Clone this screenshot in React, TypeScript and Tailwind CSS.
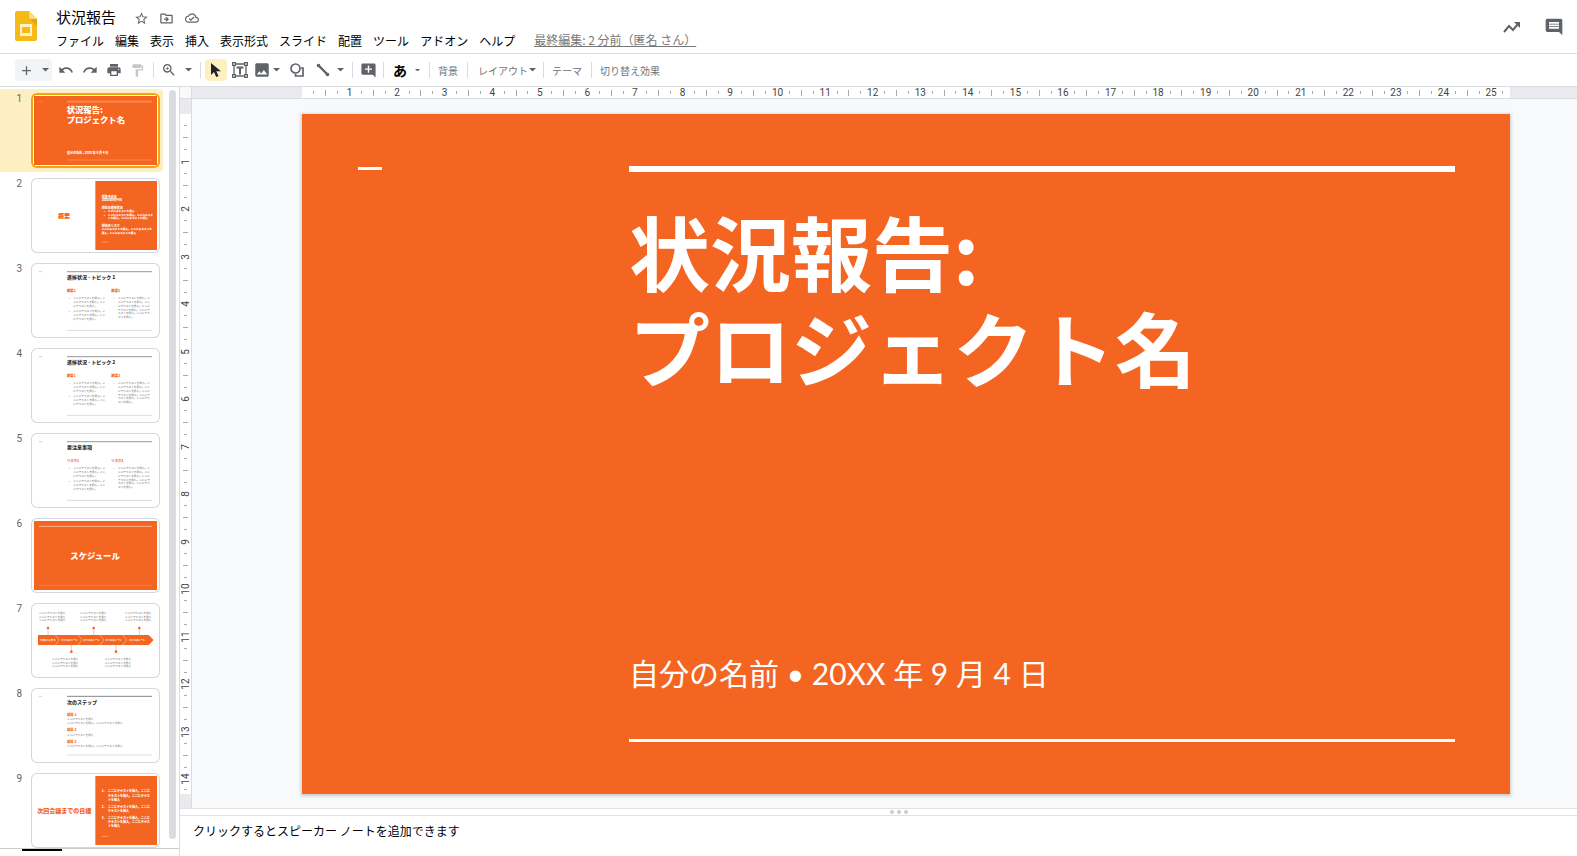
import React from 'react';
import {
  MdAdd,
  MdAddComment,
  MdFormatPaint,
  MdImage,
  MdInsertComment,
  MdOutlineCloudDone,
  MdOutlineDriveFileMove,
  MdPrint,
  MdRedo,
  MdStarBorder,
  MdUndo,
  MdZoomIn,
} from 'react-icons/md';

const ORANGE = '#f56522';

const menuItems = ['ファイル', '編集', '表示', '挿入', '表示形式', 'スライド', '配置', 'ツール', 'アドオン', 'ヘルプ'];

const PLACEHOLDER = 'ここにテキストを挿入';

/* ---------- Icons ---------- */

const SlidesLogo = () => (
  <svg viewBox="0 0 22 30" className="h-[30px] w-[22px]" aria-hidden="true">
    <path d="M2 0h12l8 8v20a2 2 0 0 1-2 2H2a2 2 0 0 1-2-2V2a2 2 0 0 1 2-2z" fill="#f5ba15" />
    <path d="M14 0l8 8h-6a2 2 0 0 1-2-2z" fill="#fadb80" />
    <path d="M15 8h7v7z" fill="#e3a413" />
    <path d="M5 13h12v12H5zM7 16v6h8v-6z" fill="#fff3cf" fillRule="evenodd" />
  </svg>
);

const PointerIcon = () => (
  <svg viewBox="0 0 12 16" className="h-4 w-3" aria-hidden="true">
    <path d="M1 1v12l3-3 2.200 5 2.300-1L6.300 9.200H11z" fill="#202124" />
  </svg>
);

const TextBoxIcon = () => (
  <svg viewBox="0 0 16 16" className="h-4 w-4" aria-hidden="true">
    <path d="M2 2h12v12H2z" fill="none" stroke="#5f6368" strokeWidth="1.300" />
    <path d="M0 0h4v4H0zM12 0h4v4h-4zM0 12h4v4H0zM12 12h4v4h-4z" fill="#5f6368" />
    <path d="M1.300 1.300h1.400v1.400H1.300zM13.300 1.300h1.400v1.400h-1.400zM1.300 13.300h1.400v1.400H1.300zM13.300 13.300h1.400v1.400h-1.400z" fill="#fff" />
    <path d="M4.500 4.500h7v2H9v6H7v-6H4.500z" fill="#5f6368" />
  </svg>
);

const ShapeIcon = () => (
  <svg viewBox="0 0 14 14" className="h-[14px] w-[14px]" aria-hidden="true" fill="none" stroke="#5f6368" strokeWidth="1.700">
    <circle cx="5.500" cy="5.500" r="4.500" />
    <path d="M11 5h2v8H5.500v-2" />
  </svg>
);

const LineIcon = () => (
  <svg viewBox="0 0 14 14" className="h-[14px] w-[14px]" aria-hidden="true">
    <path d="M2 2l10 10" stroke="#5f6368" strokeWidth="2.400" />
    <circle cx="2.500" cy="2.500" r="1.800" fill="#5f6368" />
    <circle cx="11.500" cy="11.500" r="1.800" fill="#5f6368" />
  </svg>
);

const ActivityIcon = () => (
  <svg viewBox="0 0 18 12" className="h-3 w-[18px]" aria-hidden="true">
    <path d="M1 11l5-6 4 4 5-6" fill="none" stroke="#5f6368" strokeWidth="2" />
    <path d="M11 1h6v6z" fill="#5f6368" />
  </svg>
);

const Caret = ({ small }: { small?: boolean }) => (
  <svg viewBox="0 0 8 4" className={small ? 'w-[5px]' : 'w-[7px]'} aria-hidden="true">
    <path d="M0 0h8L4 4z" fill="#5f6368" />
  </svg>
);

/* ---------- Header ---------- */

const Header = () => (
  <header className="flex h-[54px] shrink-0 border-b border-[#dadce0] pl-[15px] pr-[13px]">
    <div className="pt-[11px]">
      <SlidesLogo />
    </div>
    <div className="ml-[19px] flex flex-col">
      <div className="flex h-8 items-center pt-1 text-[#5f6368]">
        <h1 className="-mt-0.5 text-[15px] leading-5 text-black">状況報告</h1>
        <button aria-label="スターを付ける" className="ml-[18px]"><MdStarBorder size={15} /></button>
        <button aria-label="移動" className="ml-[10px]"><MdOutlineDriveFileMove size={15} /></button>
        <button aria-label="保存状況" className="ml-[11px]"><MdOutlineCloudDone size={14} /></button>
      </div>
      <nav className="flex items-center gap-[11px] text-[12px] leading-4 text-black">
        {menuItems.map((item) => (
          <button key={item}>{item}</button>
        ))}
        <a href="#history" className="mb-0.5 ml-2 text-[#777] underline">
          最終編集: 2 分前（匿名 さん）
        </a>
      </nav>
    </div>
    <div className="ml-auto flex items-center gap-[23px] text-[#5f6368]">
      <button aria-label="アクティビティ"><ActivityIcon /></button>
      <button aria-label="コメント履歴"><MdInsertComment size={20} /></button>
    </div>
  </header>
);

/* ---------- Toolbar ---------- */

const Divider = ({ className }: { className: string }) => <span className={`h-4 w-px bg-[#dadce0] ${className}`} />;

const Toolbar = () => (
  <div role="toolbar" className="flex h-[33px] shrink-0 items-center border-b border-[#dadce0] pl-[15px] text-[10px] text-[#70757a]">
    <button aria-label="新しいスライド" className="flex h-[22px] w-[37px] items-center justify-between rounded-sm bg-[#f1f3f4] pl-1 pr-[3px] text-[#5f6368]">
      <MdAdd size={15} />
      <Caret />
    </button>
    <button aria-label="元に戻す" className="ml-[6px] text-[#5f6368]"><MdUndo size={16} /></button>
    <button aria-label="やり直す" className="ml-2 text-[#5f6368]"><MdRedo size={16} /></button>
    <button aria-label="印刷" className="ml-2 text-[#5f6368]"><MdPrint size={16} /></button>
    <button aria-label="書式を貼り付け" className="ml-2 text-[#c4c6c9]"><MdFormatPaint size={15} /></button>
    <Divider className="ml-2" />
    <button aria-label="ズーム" className="ml-[7px] flex items-center gap-2 text-[#5f6368]"><MdZoomIn size={16} /><Caret /></button>
    <Divider className="ml-2" />
    <button aria-label="選択" aria-pressed="true" className="ml-1 flex h-[22px] w-[22px] items-center justify-center rounded-sm bg-[#feefc3]">
      <PointerIcon />
    </button>
    <button aria-label="テキスト ボックス" className="ml-[5px]"><TextBoxIcon /></button>
    <button aria-label="画像を挿入" className="ml-[5px] flex items-center gap-0.5 text-[#5f6368]"><MdImage size={18} /><Caret /></button>
    <button aria-label="図形" className="ml-[10px]"><ShapeIcon /></button>
    <button aria-label="線" className="ml-3 flex items-center gap-[7px]"><LineIcon /><Caret /></button>
    <Divider className="ml-2" />
    <button aria-label="コメントを追加" className="ml-[7px] text-[#5f6368]"><MdAddComment size={17} /></button>
    <Divider className="ml-[6px]" />
    <button aria-label="入力ツール" className="ml-[9px] flex items-center gap-2 text-[14px] font-bold text-black">あ<Caret small /></button>
    <Divider className="ml-[9px]" />
    <button className="ml-2">背景</button>
    <Divider className="ml-[9px]" />
    <button className="ml-[10px] flex items-center gap-px">レイアウト<Caret /></button>
    <Divider className="ml-[7px]" />
    <button className="ml-2">テーマ</button>
    <Divider className="ml-[9px]" />
    <button className="ml-2">切り替え効果</button>
  </div>
);

/* ---------- Thumbnails ---------- */

type LineProps = { x: number; y: number; size?: number; fill?: string; bold?: boolean; children: React.ReactNode };

const T = ({ x, y, size = 8, fill = '#666', bold, children }: LineProps) => (
  <text x={x} y={y} fontSize={size} fill={fill} fontWeight={bold ? 900 : 400}>
    {children}
  </text>
);

const CoverThumb = () => (
  <>
    <rect width="369" height="207" fill={ORANGE} />
    <path d="M99 17h255" stroke="#fff" strokeOpacity="0.250" strokeWidth="5" />
    <path d="M15 17h9M99 192h255" stroke="#fff" strokeOpacity="0.300" strokeWidth="2" />
    <T x={98} y={52} size={25} fill="#fff" bold>状況報告:</T>
    <T x={98} y={82} size={25} fill="#fff" bold>プロジェクト名</T>
    <T x={99} y={175} size={9} fill="#fff" bold>自分の名前 • 20XX 年 9 月 4 日</T>
  </>
);

const OverviewThumb = () => (
  <>
    <rect x="184" width="185" height="207" fill={ORANGE} />
    <T x={72} y={111} size={18} fill={ORANGE} bold>概要</T>
    <T x={203} y={51} size={9} fill="#fff" bold>報告予定日</T>
    <T x={203} y={61} size={9} fill="#fff" bold>20XX年9月4日</T>
    <T x={203} y={83} size={9} fill="#fff" bold>現在の進捗状況</T>
    <T x={210} y={93} fill="#fff" bold>•</T>
    <T x={222} y={93} fill="#fff" bold>{PLACEHOLDER}</T>
    <T x={210} y={105} fill="#fff" bold>•</T>
    <T x={222} y={105} fill="#fff" bold>{PLACEHOLDER}。ここにテキス</T>
    <T x={222} y={115} fill="#fff" bold>トを挿入。ここにテキストを挿入</T>
    <T x={203} y={137} size={9} fill="#fff" bold>現在のリスク</T>
    <T x={203} y={146} fill="#fff" bold>{PLACEHOLDER}。ここにテキストを</T>
    <T x={203} y={158} fill="#fff" bold>挿入。ここにテキストを挿入</T>
    <path d="M203 183h20" stroke="#fff" strokeOpacity="0.500" strokeWidth="2" />
  </>
);

const TopicThumb = ({ title, head }: { title: string; head: string }) => (
  <>
    <path d="M99 17h255" stroke="#aaa" strokeWidth="4" />
    <path d="M15 17h9" stroke="#bbb" strokeWidth="2" />
    <T x={99} y={40} size={15} fill="#333" bold>{title}</T>
    <T x={99} y={79} size={10} fill={ORANGE} bold>{head}1</T>
    <T x={232} y={79} size={10} fill={ORANGE} bold>{head}2</T>
    <T x={105} y={100}>•</T>
    <T x={118} y={100}>ここにテキストを挿入。こ</T>
    <T x={118} y={112}>こにテキストを挿入。ここ</T>
    <T x={118} y={122}>にテキストを挿入。</T>
    <T x={105} y={139}>•</T>
    <T x={118} y={139}>ここにテキストを挿入。こ</T>
    <T x={118} y={151}>こにテキストを挿入。ここ</T>
    <T x={118} y={162}>にテキストを挿入。</T>
    <T x={238} y={100}>•</T>
    <T x={252} y={100}>ここにテキストを挿入。こ</T>
    <T x={252} y={112}>こにテキストを挿入。ここ</T>
    <T x={252} y={122}>にテキストを挿入。ここに</T>
    <T x={252} y={134}>テキストを挿入。ここにテ</T>
    <T x={252} y={145}>キストを挿入。ここにテキ</T>
    <T x={252} y={157}>ストを挿入。</T>
    <path d="M99 193h255" stroke="#ddd" strokeWidth="3" />
  </>
);

const ScheduleThumb = () => (
  <>
    <rect width="369" height="207" fill={ORANGE} />
    <path d="M15 16h339" stroke="#fff" strokeOpacity="0.500" strokeWidth="3" />
    <path d="M15 193h339" stroke="#fff" strokeOpacity="0.150" strokeWidth="3" />
    <T x={109} y={114} size={25} fill="#fff" bold>スケジュール</T>
  </>
);

const Note = ({ x, y }: { x: number; y: number }) => (
  <>
    <T x={x} y={y}>{PLACEHOLDER}</T>
    <T x={x} y={y + 10}>{PLACEHOLDER}</T>
    <T x={x} y={y + 20}>{PLACEHOLDER}</T>
  </>
);

const TimelineThumb = () => (
  <>
    <Note x={15} y={25} />
    <Note x={138} y={25} />
    <Note x={273} y={25} />
    <Note x={54} y={163} />
    <Note x={212} y={163} />
    <path d="M42 66v21M179 66v21M316 66v21M112 117v20M246 117v20" stroke="#bbb" strokeWidth="2" />
    {[42, 179, 316].map((x) => <circle key={x} cx={x} cy="66" r="4" fill={ORANGE} />)}
    {[112, 246].map((x) => <circle key={x} cx={x} cy="137" r="4" fill={ORANGE} />)}
    <path d="M12 87h332l15 15-15 15H12z" fill={ORANGE} />
    <path d="M64 87l12 15-12 15M132 87l12 15-12 15M198 87l12 15-12 15M266 87l12 15-12 15" fill="none" stroke="#fff" strokeOpacity="0.600" strokeWidth="2" />
    <T x={18} y={105} size={8} fill="#fff" bold>プロジェクト</T>
    {[82, 148, 214, 285].map((x) => <T key={x} x={x} y={105} size={7} fill="#fff" bold>マイルストーン</T>)}
  </>
);

const StepsThumb = () => (
  <>
    <path d="M99 16h255" stroke="#888" strokeWidth="3" />
    <path d="M15 16h9" stroke="#bbb" strokeWidth="2" />
    <T x={99} y={40} size={15} fill="#333" bold>次のステップ</T>
    <T x={99} y={76} size={10} fill={ORANGE} bold>項目 1</T>
    <T x={99} y={88}>{PLACEHOLDER}</T>
    <T x={99} y={100}>{PLACEHOLDER}。{PLACEHOLDER}</T>
    <T x={99} y={121} size={10} fill={ORANGE} bold>項目 2</T>
    <T x={99} y={136}>{PLACEHOLDER}</T>
    <T x={99} y={157} size={10} fill={ORANGE} bold>項目 3</T>
    <T x={99} y={169}>{PLACEHOLDER}。{PLACEHOLDER}</T>
    <path d="M99 192h255" stroke="#ccc" strokeWidth="2" />
  </>
);

const GoalsThumb = () => (
  <>
    <rect x="184" width="185" height="207" fill={ORANGE} />
    <T x={10} y={111} size={18} fill={ORANGE} bold>次回会議までの目標</T>
    <T x={203} y={48} size={9} fill="#fff" bold>1.</T>
    <T x={222} y={48} size={9} fill="#fff" bold>{PLACEHOLDER}。ここに</T>
    <T x={222} y={62} size={9} fill="#fff" bold>テキストを挿入。ここにテキス</T>
    <T x={222} y={74} size={9} fill="#fff" bold>トを挿入</T>
    <T x={203} y={95} size={9} fill="#fff" bold>2.</T>
    <T x={222} y={95} size={9} fill="#fff" bold>{PLACEHOLDER}。ここに</T>
    <T x={222} y={107} size={9} fill="#fff" bold>テキストを挿入</T>
    <T x={203} y={128} size={9} fill="#fff" bold>3.</T>
    <T x={222} y={128} size={9} fill="#fff" bold>{PLACEHOLDER}。ここに</T>
    <T x={222} y={142} size={9} fill="#fff" bold>テキストを挿入。ここにテキス</T>
    <T x={222} y={154} size={9} fill="#fff" bold>トを挿入</T>
    <path d="M203 181h20" stroke="#fff" strokeOpacity="0.500" strokeWidth="2" />
  </>
);

const thumbs = [
  <CoverThumb />,
  <OverviewThumb />,
  <TopicThumb title="進捗状況 - トピック 1" head="概要" />,
  <TopicThumb title="進捗状況 - トピック 2" head="概要" />,
  <TopicThumb title="要注意事項" head="リスク" />,
  <ScheduleThumb />,
  <TimelineThumb />,
  <StepsThumb />,
  <GoalsThumb />,
];

const Filmstrip = () => (
  <aside className="flex w-[180px] shrink-0 flex-col border-r border-[#dadce0]">
    <div className="flex min-h-0 flex-1 justify-between pt-0.5">
      <ol className="flex w-[163px] flex-col gap-0.5">
        {thumbs.map((thumb, i) => (
          <li key={i} className={`flex h-[83px] shrink-0 items-center rounded-r ${i === 0 ? 'bg-[#feefc3]' : ''}`}>
            <span className="w-[31px] self-start pr-[9px] pt-1 text-right font-[Roboto] text-[10px] leading-3 text-[#5f6368]">{i + 1}</span>
            <button
              aria-label={`スライド ${i + 1}`}
              className={`w-[129px] rounded-md bg-white p-[3px] ring-inset ${i === 0 ? 'ring-2 ring-[#f5a30a]' : 'ring-1 ring-[#d3d6db]'}`}
            >
              <svg viewBox="0 0 369 207" className="block w-full">{thumb}</svg>
            </button>
          </li>
        ))}
      </ol>
      <div className="mb-[9px] mr-[3px] mt-px w-[7px] rounded-full bg-[#dadce0]" />
    </div>
    <div className="h-2 border-t border-[#ccc] bg-white pl-[22px]">
      <div className="h-0.5 w-10 bg-black" />
    </div>
  </aside>
);

/* ---------- Rulers ---------- */

const HorizontalRuler = () => (
  <div className="flex h-full min-w-0 items-center bg-white font-[Roboto] text-[10px] leading-none text-[#444]">
    <span className="min-w-0 flex-[0.5]" />
    {Array.from({ length: 101 }, (_, i) => i + 1).map((q) => (
      <span key={q} className="flex min-w-0 flex-1 justify-center">
        {q % 4 === 0 ? <span>{q / 4}</span> : <span className={`w-px bg-[#aaa] ${q % 2 === 0 ? 'h-[6px]' : 'h-[3px]'}`} />}
      </span>
    ))}
    <span className="min-w-0 flex-[0.1]" />
  </div>
);

const VerticalRuler = () => (
  <div className="flex h-full min-h-0 flex-col items-center bg-white font-[Roboto] text-[10px] leading-none text-[#444]">
    <span className="min-h-0 flex-[0.5]" />
    {Array.from({ length: 57 }, (_, i) => i + 1).map((q) => (
      <span key={q} className={`flex min-h-0 items-center justify-center ${q === 57 ? 'flex-[0.7]' : 'flex-1'}`}>
        {q % 4 === 0 ? <span className="-rotate-90">{q / 4}</span> : <span className={`h-px bg-[#aaa] ${q % 2 === 0 ? 'w-[5px]' : 'w-[3px]'}`} />}
      </span>
    ))}
  </div>
);

/* ---------- Slide ---------- */

const Slide = () => (
  <section className="grid aspect-video grid-cols-[327fr_826fr] bg-[#f56522] pr-[55px] text-white shadow-[0_1px_3px_1px_rgba(60,64,67,0.25)]">
    <div className="pl-[56px] pt-[53px]">
      <div className="h-[3px] w-6 bg-white" />
    </div>
    <div className="flex flex-col pb-[52px] pt-[52px]">
      <div className="h-[6px] bg-white" />
      <h2 className="mt-[30px] whitespace-pre-line text-[81px] font-bold leading-[96px]">{'状況報告:\nプロジェクト名'}</h2>
      <p className="mb-[42px] mt-auto font-[Lato,'Noto_Sans_CJK_JP',sans-serif] text-[30px] leading-[48px]">
        自分の名前 • 20XX 年 9 月 4 日
      </p>
      <div className="h-[3px] bg-white" />
    </div>
  </section>
);

const Workspace = () => (
  <div className="grid flex-1 grid-cols-[12px_110px_1fr_67px] grid-rows-[12px_15px_auto_1fr] bg-[#f8f9fa]">
    <div className="border-b border-r border-[#dadce0]" />
    <div className="border-b border-[#dadce0] bg-[#e8eaed]" />
    <div className="min-w-0 border-b border-[#dadce0]"><HorizontalRuler /></div>
    <div className="border-b border-[#dadce0] bg-[#e8eaed]" />

    <div className="border-r border-[#dadce0] bg-[#e8eaed]" />
    <div className="col-span-3" />

    <div className="border-r border-[#dadce0]"><VerticalRuler /></div>
    <div />
    <Slide />
    <div />

    <div className="border-r border-[#dadce0] bg-[#e8eaed]" />
    <div className="col-span-3" />
  </div>
);

const SpeakerNotes = () => (
  <>
    <div className="flex h-2 shrink-0 items-center justify-center gap-[3px] border-y border-[#e0e2e5] pl-10">
      {[0, 1, 2].map((dot) => <span key={dot} className="h-1 w-1 rounded-full bg-[#ccc]" />)}
    </div>
    <div className="h-10 shrink-0 px-[13px] pt-[7px]">
      <textarea
        aria-label="スピーカー ノート"
        rows={1}
        placeholder="クリックするとスピーカー ノートを追加できます"
        className="block w-full resize-none overflow-hidden text-[12px] leading-4 outline-none placeholder:text-black"
      />
    </div>
  </>
);

export default function App() {
  return (
    <div lang="ja" className="flex h-screen flex-col overflow-hidden bg-white font-['Noto_Sans_CJK_JP',sans-serif]">
      <Header />
      <Toolbar />
      <div className="flex min-h-0 flex-1">
        <Filmstrip />
        <main className="flex min-w-0 flex-1 flex-col">
          <Workspace />
          <SpeakerNotes />
        </main>
      </div>
    </div>
  );
}
